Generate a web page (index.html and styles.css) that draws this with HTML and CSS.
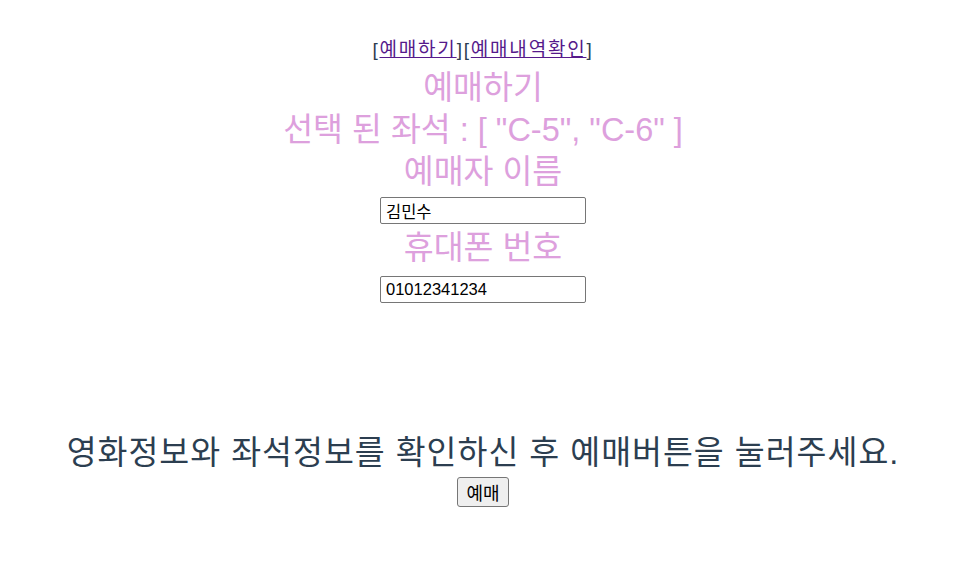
FILE: index.html
```html
<!DOCTYPE html>
<html lang="ko">
<head>
<meta charset="utf-8">
<title>예매하기</title>
<link rel="stylesheet" href="styles.css">
</head>
<body>
<div class="app">
  <nav class="nav">[<a href="#" class="link">예매하기</a>][<a href="#" class="link">예매내역확인</a>]</nav>
  <div class="title title-first">예매하기</div>
  <div class="title">선택 된 좌석 : [ "C-5", "C-6" ]</div>
  <div class="title">예매자 이름</div>
  <input class="field field-name" type="text" value="김민수">
  <div class="title title-phone">휴대폰 번호</div>
  <input class="field field-phone" type="text" value="01012341234">
  <div class="notice">영화정보와 좌석정보를 확인하신 후 예매버튼을 눌러주세요.</div>
  <button class="btn" type="button">예매</button>
</div>
</body>
</html>
```
FILE: styles.css
```css
html, body {
  margin: 0;
  padding: 0;
  background: #fff;
}
body {
  margin: 8px;
  font-family: "Liberation Sans", Arial, "Noto Sans CJK KR", sans-serif;
  color: #2c3e50;
}
.app {
  display: flex;
  flex-direction: column;
  align-items: center;
  text-align: center;
  padding-top: 31px;
  padding-left: 8px;
}
.nav {
  font-size: 19px;
  line-height: 21px;
  height: 21px;
  letter-spacing: 1.8px;
  white-space: nowrap;
}
.link {
  color: #551a8b;
  text-decoration: underline;
}
.title {
  color: #dda0dd;
  font-size: 32.5px;
  line-height: 42px;
  white-space: nowrap;
}
.title-first {
  margin-top: 7px;
}
.field {
  box-sizing: border-box;
  width: 206px;
  height: 27px;
  padding: 1px 5px;
  border: 1px solid #767676;
  border-radius: 2px;
  font-family: "Liberation Sans", Arial, "Noto Sans CJK KR", sans-serif;
  font-size: 16.5px;
  color: #000;
  background: #fff;
}
.field-name {
  margin-top: 4px;
}
.title-phone {
  margin-top: 3px;
}
.field-phone {
  margin-top: 7px;
}
.notice {
  margin-top: 129px;
  font-size: 32.5px;
  line-height: 42px;
  letter-spacing: 1px;
  color: #2c3e50;
  white-space: nowrap;
}
.btn {
  box-sizing: border-box;
  height: 30px;
  padding: 0 8px;
  margin-top: 3px;
  font-family: "Noto Sans CJK KR", sans-serif;
  font-size: 18px;
  line-height: 26px;
  color: #000;
  background: #efefef;
  border: 1px solid #767676;
  border-radius: 3px;
}
```
